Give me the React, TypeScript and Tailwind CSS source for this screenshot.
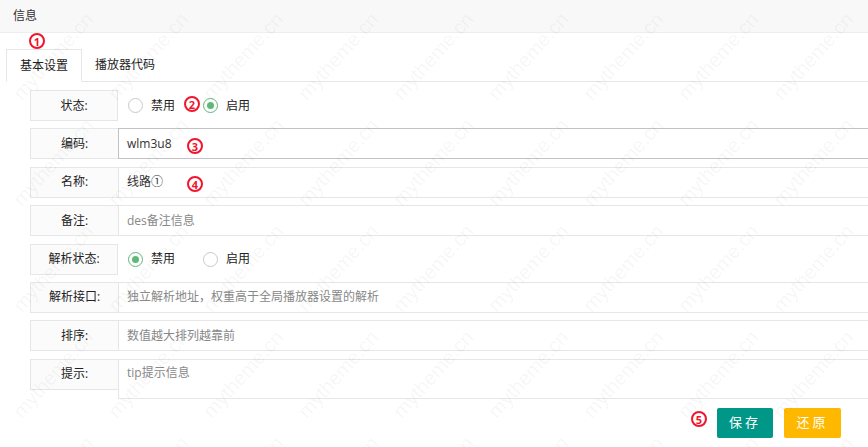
import type { ReactNode } from 'react'

const font = { fontFamily: '"Open Sans", "Noto Sans CJK SC", sans-serif' }

function Mark({ n, className }: { n: string; className: string }) {
  return (
    <span
      className={`absolute flex h-[16px] w-[16px] items-center justify-center rounded-full border-2 border-[#f0142d] text-[11px] font-bold leading-none text-[#f0142d] ${className}`}
    >
      {n}
    </span>
  )
}

function Radio({ checked, label }: { checked?: boolean; label: string }) {
  return (
    <div className="mr-[28px] flex items-center">
      <span
        className={`flex h-[15px] w-[15px] items-center justify-center rounded-full border-[1.5px] ${
          checked ? 'border-[#5fb878]' : 'border-[#c9c9c9]'
        }`}
      >
        {checked && <span className="h-[7px] w-[7px] rounded-full bg-[#5fb878]" />}
      </span>
      <span className="ml-[8px] text-[#222]">{label}</span>
    </div>
  )
}

function Row({
  label,
  children,
  input = true,
  focus = false,
  tall = false,
}: {
  label: string
  children: ReactNode
  input?: boolean
  focus?: boolean
  tall?: boolean
}) {
  return (
    <div className="flex items-start">
      <div
        className={`flex h-[31px] w-[88px] shrink-0 items-center justify-center border border-[#e6e6e6] bg-[#fbfbfb] text-[#222] ${
          input ? 'border-r-0' : ''
        }`}
      >
        {label}
      </div>
      {input ? (
        <div
          className={`flex flex-1 border pl-[8px] ${focus ? 'border-[#c2c2c2]' : 'border-[#e6e6e6]'} ${
            tall ? 'h-[40px] items-start pt-[4px]' : 'h-[31px] items-center'
          }`}
        >
          {children}
        </div>
      ) : (
        <div className="flex h-[31px] flex-1 items-center pl-[10px]">{children}</div>
      )}
    </div>
  )
}

// watermark grid, clipped by the page like in the screenshot
const marks = Array.from({ length: 10 }, (_, i) =>
  Array.from({ length: 5 }, (_, j) => ({ x: 53 + 95 * i, y: 56 + 106 * j }))
).flat()

export default function App() {
  return (
    <div className="relative h-[447px] w-[868px] overflow-hidden bg-white text-[12px]" style={font}>
      <div className="flex h-[33px] items-center border-b border-[#eeeeee] bg-[#f8f8f8] pl-[13px] text-[#333]">
        信息
      </div>

      <div className="pl-[6px] pt-[16px]">
        <div className="flex border-b border-[#e6e6e6]">
          <div className="-mb-px flex h-[33px] items-center border border-b-white border-[#e6e6e6] bg-white px-[13px] text-[#222]">
            基本设置
          </div>
          <div className="flex h-[32px] items-center px-[13px] text-[#222]">播放器代码</div>
        </div>
      </div>

      <div className="flex w-[920px] flex-col gap-[7.4px] pl-[30px] pt-[8px]">
        <Row label="状态:" input={false}>
          <Radio label="禁用" />
          <Radio label="启用" checked />
        </Row>
        <Row label="编码:" focus>
          <span className="text-[#333]">wlm3u8</span>
        </Row>
        <Row label="名称:">
          <span className="text-[#333]">线路①</span>
        </Row>
        <Row label="备注:">
          <span className="text-[#888]">des备注信息</span>
        </Row>
        <Row label="解析状态:" input={false}>
          <Radio label="禁用" checked />
          <Radio label="启用" />
        </Row>
        <Row label="解析接口:">
          <span className="text-[#888]">独立解析地址，权重高于全局播放器设置的解析</span>
        </Row>
        <Row label="排序:">
          <span className="text-[#888]">数值越大排列越靠前</span>
        </Row>
        <Row label="提示:" tall>
          <span className="text-[#888]">tip提示信息</span>
        </Row>
      </div>

      <div className="mt-[9px] flex justify-end gap-[11px] pr-[27px]">
        <button className="flex h-[30px] w-[56px] items-center justify-center rounded-[2px] bg-[#009688] text-[13px] tracking-[3px] text-white">
          保存
        </button>
        <button className="flex h-[30px] w-[57px] items-center justify-center rounded-[2px] bg-[#ffb800] text-[13px] tracking-[3px] text-white">
          还原
        </button>
      </div>

      <Mark n="1" className="left-[29px] top-[33px]" />
      <Mark n="2" className="left-[184px] top-[96px]" />
      <Mark n="3" className="left-[187px] top-[138px]" />
      <Mark n="4" className="left-[187px] top-[176px]" />
      <Mark n="5" className="left-[691px] top-[411px]" />

      <div className="pointer-events-none absolute inset-0">
        {marks.map((m, k) => (
          <span
            key={k}
            className="absolute whitespace-nowrap text-[20px] text-black/[0.05]"
            style={{
              left: m.x,
              top: m.y,
              transform: 'translate(-50%, -50%) rotate(-48deg)',
              fontFamily: '"Liberation Sans", sans-serif',
            }}
          >
            mytheme.cn
          </span>
        ))}
      </div>
    </div>
  )
}
